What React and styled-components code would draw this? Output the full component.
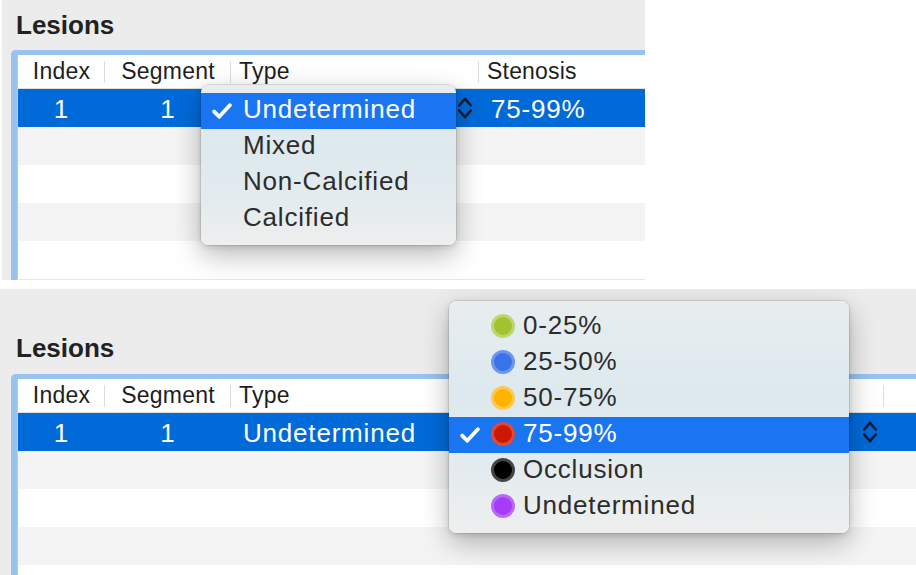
import React from "react";
import styled, { createGlobalStyle } from "styled-components";

const GlobalStyle = createGlobalStyle`
  html, body { margin: 0; padding: 0; background: #ffffff; }
  body { font-family: "Liberation Sans", Arial, sans-serif; }
`;

const Page = styled.div`
  width: 916px;
  height: 575px;
  overflow: hidden;
  display: flex;
  flex-direction: column;
  gap: 9px;
`;

const Panel = styled.section`
  position: relative;
  flex: none;
  box-sizing: border-box;
  background: #ececec;
  margin-left: ${(p) => p.$inset}px;
  width: ${(p) => p.$width}px;
  height: ${(p) => p.$height}px;
  padding: ${(p) => p.$top}px 0 0 ${(p) => 11 - p.$inset}px;
  overflow: hidden;
`;

const Title = styled.h2`
  margin: 0 0 ${(p) => p.$gap}px 5px;
  font: bold 26px/30px "Liberation Sans", Arial, sans-serif;
  color: #222222;
`;

const Frame = styled.div`
  width: 1100px;
  border-left: 6px solid #97c2f1;
  border-top: 5px solid #97c2f1;
  border-top-left-radius: 5px;
  background: #ffffff;
`;

const Table = styled.div`
  border-left: 1px solid #c8c8c8;
  border-bottom: 1px solid #e6e6e6;
`;

const COLS = "87px 126px 248px 405px 1fr";

const HeaderRow = styled.div`
  display: grid;
  grid-template-columns: ${COLS};
  height: 33px;
  border-bottom: 1px solid #dedede;
  background: #ffffff;
`;

const HeadCell = styled.div`
  position: relative;
  font-size: 23px;
  line-height: 33px;
  color: #1e1e1e;
  letter-spacing: 0.2px;
  text-align: ${(p) => (p.$center ? "center" : "left")};
  padding-left: ${(p) => (p.$center ? 0 : 8)}px;
  &::after {
    content: "";
    display: ${(p) => (p.$last ? "none" : "block")};
    position: absolute;
    right: 0;
    top: 6px;
    bottom: 5px;
    width: 1px;
    background: #dcdcdc;
  }
`;

const Row = styled.div`
  display: grid;
  grid-template-columns: ${COLS};
  height: 38px;
  box-sizing: border-box;
  background: ${(p) => (p.$selected ? "#006ad9" : p.$alt ? "#f4f4f4" : "#ffffff")};
  color: ${(p) => (p.$selected ? "#ffffff" : "#222222")};
`;

const Cell = styled.div`
  font-size: 26px;
  letter-spacing: 0.8px;
  line-height: 36px;
  padding-top: 2px;
  white-space: nowrap;
  text-align: ${(p) => (p.$center ? "center" : "left")};
`;

const PopupCell = styled.div`
  display: flex;
  align-items: center;
  justify-content: space-between;
  padding: 0 6px 0 12px;
  font-size: 26px;
  letter-spacing: 0.8px;
  line-height: 36px;
  white-space: nowrap;
  & > span { padding-top: 2px; }
`;

const Menu = styled.div`
  position: absolute;
  left: ${(p) => p.$x}px;
  top: ${(p) => p.$y}px;
  width: ${(p) => p.$w}px;
  box-sizing: border-box;
  padding: 8px 0;
  border-radius: 7px;
  background: linear-gradient(180deg, #e8edef 0%, #dde9ee 40%, #e3ebee 70%, #eeefef 100%);
  box-shadow: 0 0 0 0.5px rgba(0, 0, 0, 0.18), 0 10px 28px rgba(0, 0, 0, 0.28),
    0 2px 6px rgba(0, 0, 0, 0.12);
  z-index: 2;
`;

const Item = styled.div`
  height: 36px;
  box-sizing: border-box;
  padding: 0 0 3px 11px;
  display: flex;
  align-items: center;
  background: ${(p) => (p.$active ? "#1a75f2" : "transparent")};
  color: ${(p) => (p.$active ? "#ffffff" : "#2c2c2c")};
  font-size: 26px;
  line-height: 33px;
  letter-spacing: 0.8px;
  white-space: nowrap;
`;

const CheckSlot = styled.span`
  width: 31px;
  flex: none;
  display: flex;
  align-items: center;
  margin-top: 3px;
`;

const Dot = styled.span`
  flex: none;
  width: 24px;
  height: 24px;
  box-sizing: border-box;
  border-radius: 50%;
  background: ${(p) => p.$core};
  border: 3px solid ${(p) => p.$ring};
  margin-right: 8px;
`;

const Check = () => (
  <svg width="20" height="16" viewBox="0 0 20 16">
    <path
      d="M2.2 8.6 L7.2 13.8 L17.8 2.2"
      fill="none"
      stroke="#ffffff"
      strokeWidth="3.8"
      strokeLinecap="round"
      strokeLinejoin="round"
    />
  </svg>
);

const Chevrons = () => (
  <svg width="16" height="26" viewBox="0 0 16 26">
    <path
      d="M2.2 10.5 L8 3.8 L13.8 10.5 M2.2 15.5 L8 22.2 L13.8 15.5"
      fill="none"
      stroke="#0b1a33"
      strokeWidth="2.6"
      strokeLinecap="round"
      strokeLinejoin="round"
    />
  </svg>
);

const TYPES = ["Undetermined", "Mixed", "Non-Calcified", "Calcified"];
const STENOSIS = [
  { label: "0-25%", core: "#a3c232", ring: "#bdd670" },
  { label: "25-50%", core: "#3a72e8", ring: "#6b96ee" },
  { label: "50-75%", core: "#ffb300", ring: "#ffc94f" },
  { label: "75-99%", core: "#cc1800", ring: "#dd4a3c" },
  { label: "Occlusion", core: "#000000", ring: "#444444" },
  { label: "Undetermined", core: "#a63cf8", ring: "#ba68fa" },
];

function LesionTable({ stenosisCovered }) {
  return (
    <Frame>
      <Table>
        <HeaderRow>
          <HeadCell $center>Index</HeadCell>
          <HeadCell $center>Segment</HeadCell>
          <HeadCell>Type</HeadCell>
          <HeadCell>{stenosisCovered ? "" : "Stenosis"}</HeadCell>
          <HeadCell $last />
        </HeaderRow>
        <Row $selected>
          <Cell $center>1</Cell>
          <Cell $center>1</Cell>
          <PopupCell>
            <span>Undetermined</span>
            <Chevrons />
          </PopupCell>
          <PopupCell>
            <span>{stenosisCovered ? "" : "75-99%"}</span>
            <Chevrons />
          </PopupCell>
          <Cell />
        </Row>
        {[1, 2, 3, 4].map((i) => (
          <Row key={i} $alt={i % 2 === 1}>
            <Cell />
            <Cell />
            <Cell />
            <Cell />
            <Cell />
          </Row>
        ))}
      </Table>
    </Frame>
  );
}

export default function App() {
  return (
    <>
      <GlobalStyle />
      <Page>
        <Panel $inset={2} $width={643} $height={280} $top={10}>
          <Title $gap={10}>Lesions</Title>
          <LesionTable />
          <Menu $x={199} $y={85} $w={255}>
            {TYPES.map((t, i) => (
              <Item key={t} $active={i === 0}>
                <CheckSlot>{i === 0 && <Check />}</CheckSlot>
                {t}
              </Item>
            ))}
          </Menu>
        </Panel>
        <Panel $inset={0} $width={916} $height={286} $top={44}>
          <Title $gap={11}>Lesions</Title>
          <LesionTable stenosisCovered />
          <Menu $x={449} $y={12} $w={400}>
            {STENOSIS.map((s, i) => (
              <Item key={s.label} $active={i === 3}>
                <CheckSlot>{i === 3 && <Check />}</CheckSlot>
                <Dot $core={s.core} $ring={s.ring} />
                {s.label}
              </Item>
            ))}
          </Menu>
        </Panel>
      </Page>
    </>
  );
}
